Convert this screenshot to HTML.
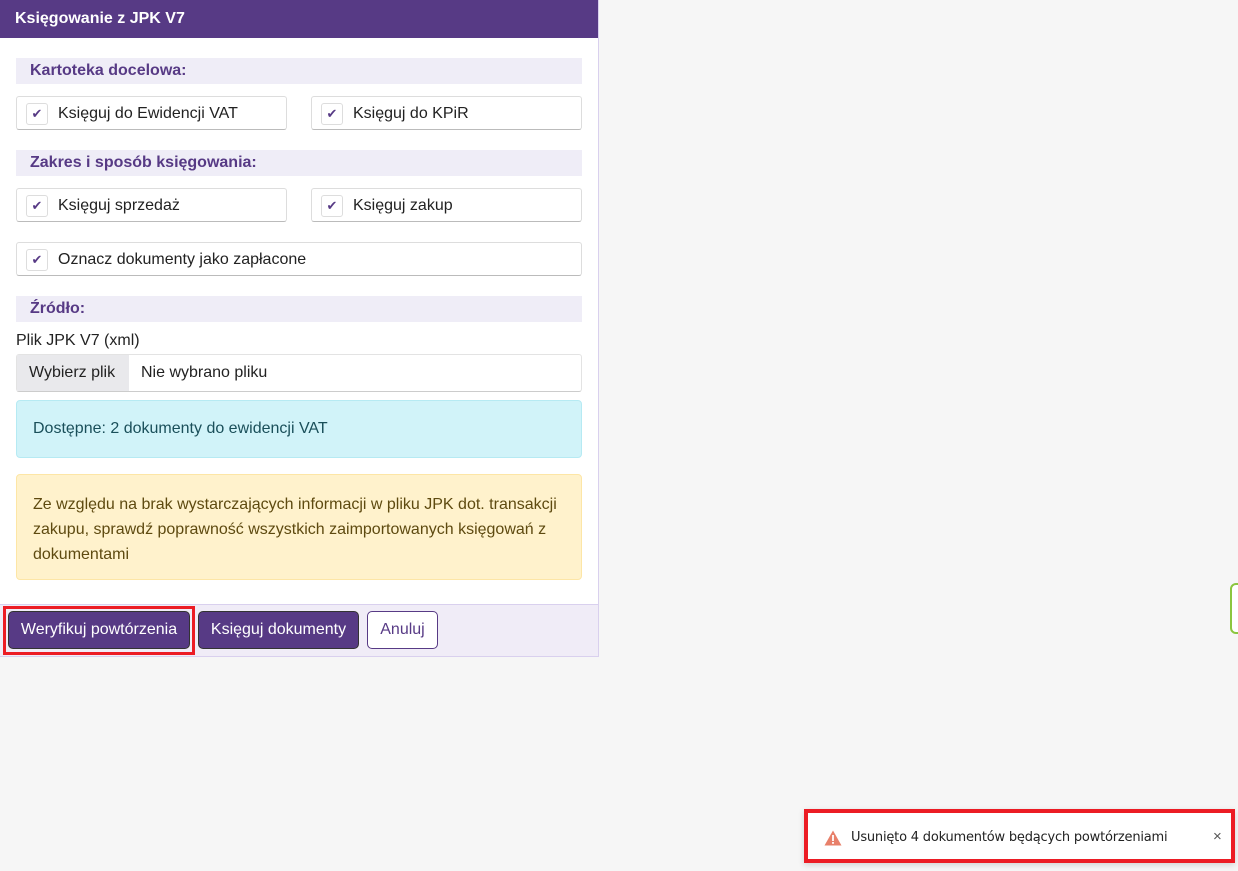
<!DOCTYPE html><html><head><meta charset="utf-8"><style>
body{margin:0;width:1238px;height:871px;background:#f6f6f6;font-family:"Liberation Sans",sans-serif;position:relative;overflow:hidden;color:#222}
.a{position:absolute;box-sizing:border-box}
.panel{left:0;top:0;width:599px;height:657px;background:#fff;border-right:1px solid #d9d0ee;border-bottom:1px solid #d9d0ee}
.hdr{left:0;top:0;width:598px;height:38px;background:#573a85;color:#fff;font-weight:bold;font-size:16px;padding:10px 15px}
.sec{left:16px;width:566px;height:26px;background:#efedf7;color:#573a85;font-weight:bold;font-size:16px;padding:4px 14px}
.cb{height:34px;border:1px solid #ddd;border-bottom-color:#bbb;border-radius:3px;font-size:16px;padding:8px 0 0 41px;background:#fff}
.cb i{position:absolute;left:9px;top:6px;width:20px;height:20px;border:1px solid #ddd;border-radius:3px;font-style:normal;color:#573a85;font-size:13px;text-align:center;line-height:20px}
.btn{top:611px;height:38px;border-radius:5px;font-size:16px;text-align:center;line-height:36px}
</style></head><body>
<div class="a panel"></div>
<div class="a hdr">Księgowanie z JPK V7</div>
<div class="a sec" style="top:58px">Kartoteka docelowa:</div>
<div class="a cb" style="left:16px;top:96px;width:271px"><i>✔</i>Księguj do Ewidencji VAT</div>
<div class="a cb" style="left:311px;top:96px;width:271px"><i>✔</i>Księguj do KPiR</div>
<div class="a sec" style="top:150px">Zakres i sposób księgowania:</div>
<div class="a cb" style="left:16px;top:188px;width:271px"><i>✔</i>Księguj sprzedaż</div>
<div class="a cb" style="left:311px;top:188px;width:271px"><i>✔</i>Księguj zakup</div>
<div class="a cb" style="left:16px;top:242px;width:566px"><i>✔</i>Oznacz dokumenty jako zapłacone</div>
<div class="a sec" style="top:296px">Źródło:</div>
<div class="a" style="left:16px;top:332px;font-size:16px">Plik JPK V7 (xml)</div>
<div class="a" style="left:16px;top:354px;width:566px;height:38px;border:1px solid #e3e3e3;border-bottom-color:#ccc;border-radius:3px;font-size:16px">
<div class="a" style="left:0;top:0;width:112px;height:36px;background:#e9e9ec;padding:9px 12px">Wybierz plik</div>
<div class="a" style="left:124px;top:9px">Nie wybrano pliku</div></div>
<div class="a" style="left:16px;top:400px;width:566px;height:58px;background:#d1f3f9;border:1px solid #b6eaf3;border-radius:4px;padding:19px 16px;font-size:16px;color:#1a4f5a">Dostępne: 2 dokumenty do ewidencji VAT</div>
<div class="a" style="left:16px;top:474px;width:566px;height:106px;background:#fff2cc;border:1px solid #fde6a6;border-radius:4px;padding:17px 16px;font-size:16px;line-height:25px;color:#5e4a10">Ze względu na brak wystarczających informacji w pliku JPK dot. transakcji zakupu, sprawdź poprawność wszystkich zaimportowanych księgowań z dokumentami</div>
<div class="a" style="left:0;top:604px;width:598px;height:52px;background:#f0ecf7;border-top:1px solid #d9d0ee"></div>
<div class="a" style="left:3px;top:606px;width:192px;height:49px;border:3px solid #ec1c24"></div>
<div class="a btn" style="left:8px;width:182px;background:#573a85;border:1px solid #333;color:#fff">Weryfikuj powtórzenia</div>
<div class="a btn" style="left:198px;width:161px;background:#573a85;border:1px solid #333;color:#fff">Księguj dokumenty</div>
<div class="a btn" style="left:367px;width:71px;background:#fff;border:1px solid #573a85;color:#573a85">Anuluj</div>
<div class="a" style="left:1230px;top:583px;width:20px;height:51px;border:2px solid #8cc63f;border-radius:6px;background:#fff"></div>
<div class="a" style="left:804px;top:809px;width:431px;height:54px;border:4px solid #ec1c24;background:#fff;box-shadow:0 2px 6px rgba(0,0,0,.15)">
<svg class="a" style="left:16px;top:17px" width="18" height="16" viewBox="0 0 18 16"><path d="M9 0.5L17.5 15.5H0.5Z" fill="#e8806a"/><rect x="8.1" y="5" width="1.8" height="6" fill="#fff"/><rect x="8.1" y="12" width="1.8" height="1.8" fill="#fff"/></svg>
<div class="a" style="left:43px;top:17px;font-size:13px;color:#222;font-family:'DejaVu Sans',sans-serif;letter-spacing:-0.2px">Usunięto 4 dokumentów będących powtórzeniami</div>
<div class="a" style="left:405px;top:15px;font-size:15px;color:#555">×</div>
</div>
</body></html>
